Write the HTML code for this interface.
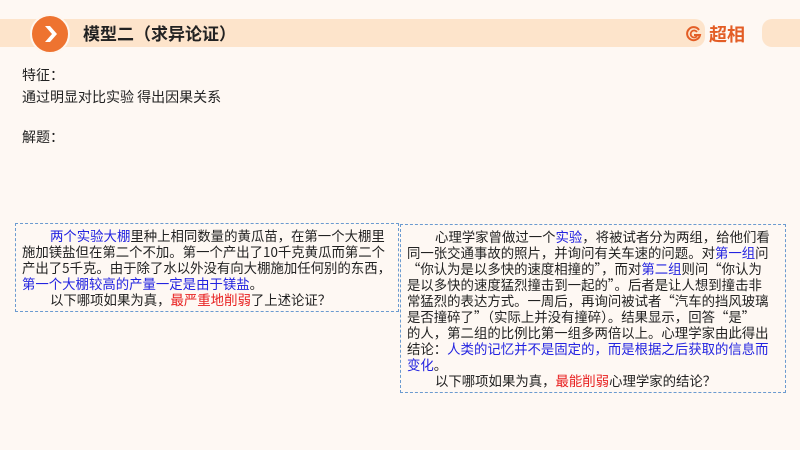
<!DOCTYPE html>
<html><head><meta charset="utf-8"><style>
*{margin:0;padding:0;box-sizing:border-box}
body{width:800px;height:450px;background:#fef8f3;position:relative;overflow:hidden;font-family:"Noto Sans CJK SC","Liberation Sans",sans-serif;color:#222}
.bar{position:absolute;top:19px;height:28px;background:#fde4cb}
.circ{position:absolute;left:30px;top:14px;width:40px;height:40px;border-radius:50%;background:#ee7330;border:2px solid #fff6ee}
.title{position:absolute;left:83px;top:21px;font-size:17px;font-weight:bold;line-height:24px;color:#222}
.t{position:absolute;left:22px;font-size:14px;line-height:16px}
.box{position:absolute;border:1.5px dashed #6b9bd0;font-size:13.4px;line-height:16px;padding:3px 0 0 6px;white-space:nowrap}
.b{color:#2323e0}.r{color:#e82020}
.i{padding-left:28px}
</style></head><body>
<div class="bar" style="left:0;width:705px;border-radius:0 10px 10px 0"></div>
<div class="bar" style="left:762px;width:38px;border-radius:10px 0 0 10px"></div>
<div class="circ"><svg width="36" height="36" viewBox="0 0 36 36"><path d="M13 10 L20 18 L13 26 L18 26 L25 18 L18 10 Z" fill="#fff"/></svg></div>
<div class="title">模型二（求异论证）</div>
<div style="position:absolute;left:686px;top:22px;display:flex;align-items:center;color:#e35d25;font-weight:bold;font-size:18px;line-height:24px">
<svg width="16" height="16" viewBox="0 0 16 16" style="margin-right:7px"><path d="M13 4 A6.5 6.5 0 1 0 14 9 H8" fill="none" stroke="#e35d25" stroke-width="2"/><path d="M11 6 A3.5 3.5 0 1 0 11 10" fill="none" stroke="#e35d25" stroke-width="1.8"/></svg>超相</div>
<div class="t" style="top:67px">特征：</div>
<div class="t" style="top:89px">通过明显对比实验 得出因果关系</div>
<div class="t" style="top:129px">解题：</div>
<div class="box" style="left:15px;top:223px;width:384px;height:89px">
<div class="i"><span class="b">两个实验大棚</span>里种上相同数量的黄瓜苗，在第一个大棚里</div>
<div>施加镁盐但在第二个不加。第一个产出了10千克黄瓜而第二个</div>
<div>产出了5千克。由于除了水以外没有向大棚施加任何别的东西，</div>
<div><span class="b">第一个大棚较高的产量一定是由于镁盐</span>。</div>
<div class="i">以下哪项如果为真，<span class="r">最严重地削弱</span>了上述论证？</div>
</div>
<div class="box" style="left:400px;top:224px;width:386px;height:169px">
<div class="i">心理学家曾做过一个<span class="b">实验</span>，将被试者分为两组，给他们看</div>
<div>同一张交通事故的照片，并询问有关车速的问题。对<span class="b">第一组</span>问</div>
<div>“你认为是以多快的速度相撞的”，而对<span class="b">第二组</span>则问“你认为</div>
<div>是以多快的速度猛烈撞击到一起的”。后者是让人想到撞击非</div>
<div>常猛烈的表达方式。一周后，再询问被试者“汽车的挡风玻璃</div>
<div>是否撞碎了”（实际上并没有撞碎）。结果显示，回答“是”</div>
<div>的人，第二组的比例比第一组多两倍以上。心理学家由此得出</div>
<div>结论：<span class="b">人类的记忆并不是固定的，而是根据之后获取的信息而</span></div>
<div><span class="b">变化</span>。</div>
<div class="i">以下哪项如果为真，<span class="r">最能削弱</span>心理学家的结论？</div>
</div>
</body></html>
